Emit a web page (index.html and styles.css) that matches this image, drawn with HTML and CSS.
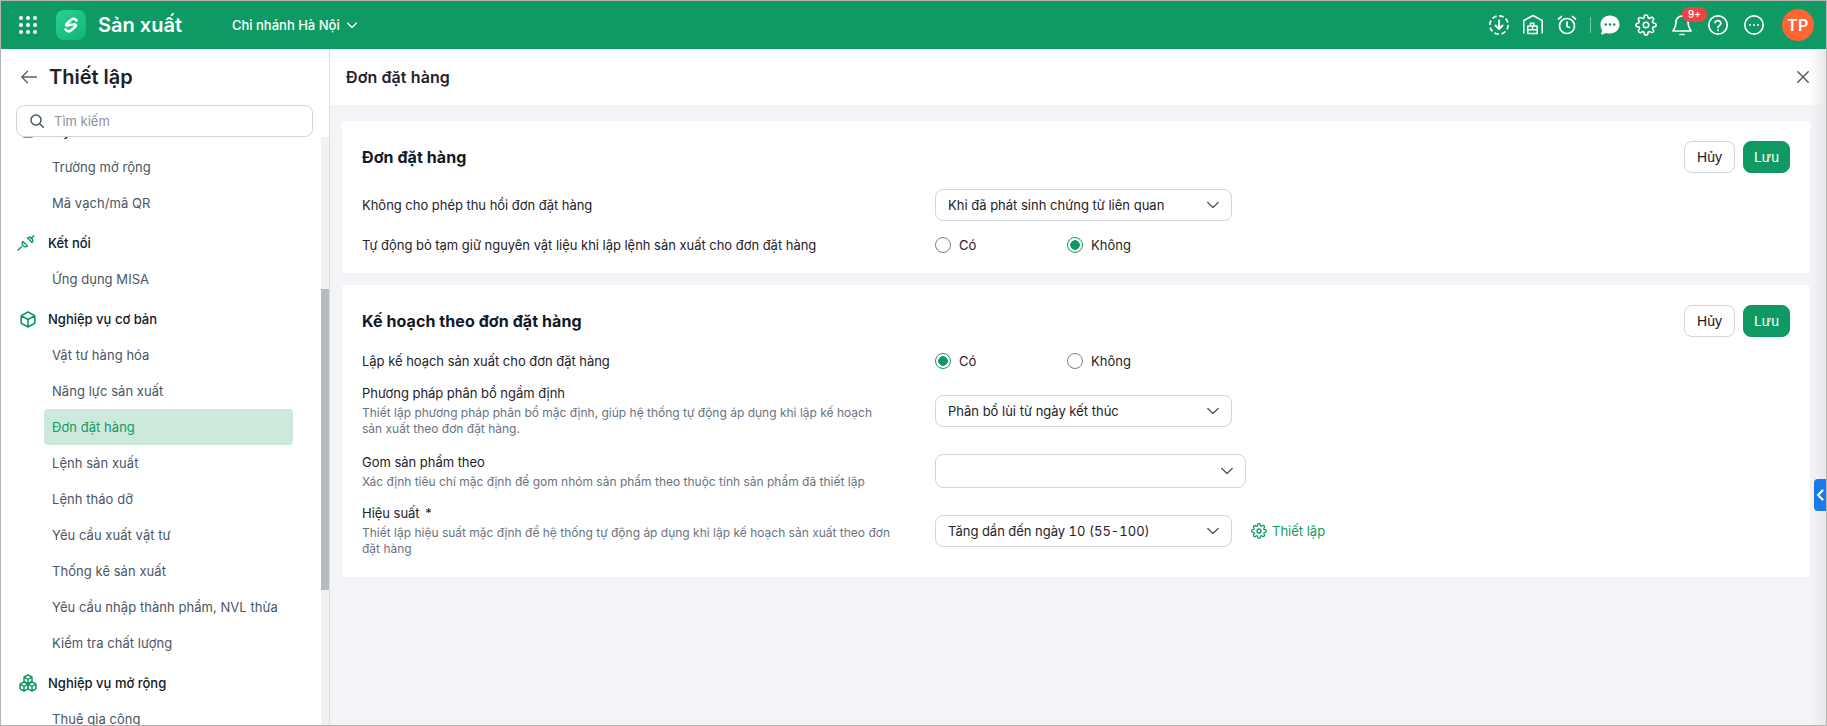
FILE: index.html
```html
<!DOCTYPE html>
<html lang="vi">

<head>
    <meta charset="UTF-8">
    <meta name="viewport" content="width=device-width, initial-scale=1.0">
    <title>Đơn đặt hàng</title>
    <link rel="stylesheet" href="styles.css">
</head>

<body>
    <div class="window">
        <header class="topbar">
            <svg class="apps-icon" width="18" height="18" viewBox="0 0 18 18" fill="#fff">
                <circle cx="2" cy="2" r="2"/><circle cx="9" cy="2" r="2"/><circle cx="16" cy="2" r="2"/>
                <circle cx="2" cy="9" r="2"/><circle cx="9" cy="9" r="2"/><circle cx="16" cy="9" r="2"/>
                <circle cx="2" cy="16" r="2"/><circle cx="9" cy="16" r="2"/><circle cx="16" cy="16" r="2"/>
            </svg>
            <div class="logo">
                <svg width="20" height="20" viewBox="0 0 20 20" fill="none" stroke="#fff" stroke-width="2.600" stroke-linecap="round" stroke-linejoin="round">
                    <path d="M15.500 5.500C13 2.500 11 3.800 9 5.800L5.500 9C4.500 10.500 6 11 8 10L12 9.500C14.500 9 15.500 10 14.500 11.500L11 14.500C9 16.500 7 17.500 4.500 14.500"/>
                </svg>
            </div>
            <div class="app-name">Sản xuất</div>
            <div class="branch">
                Chi nhánh Hà Nội
                <svg width="12" height="12" viewBox="0 0 12 12" fill="none" stroke="#fff" stroke-width="1.300" stroke-linecap="round" stroke-linejoin="round"><path d="M1.500 4 6 8.500 10.500 4"/></svg>
            </div>
            <div class="topbar-right">
                <svg class="top-icon tight" width="22" height="22" viewBox="0 0 22 22" fill="none" stroke="#fff" stroke-width="1.700" stroke-linejoin="round">
                    <circle cx="11" cy="11" r="9.200" stroke-dasharray="4.600 2.600"/>
                    <path d="M11 6.500v8M7.500 11.500 11 15l3.500-3.500" stroke-width="2" stroke-linecap="round"/>
                </svg>
                <svg class="top-icon tight" width="22" height="22" viewBox="0 0 22 22" fill="none" stroke="#fff" stroke-width="1.500" stroke-linejoin="round">
                    <path d="M1.800 19.500V6.500L11 1.500l9.200 5v13"/>
                    <path d="M5.800 19.500v-7.500h9.400v7.500zM5.800 15.800h9.400M8.500 12V9.300h3.400V12M10.500 12v3.800"/>
                </svg>
                <svg class="top-icon tight" width="22" height="22" viewBox="0 0 22 22" fill="none" stroke="#fff" stroke-width="1.700" stroke-linecap="round" stroke-linejoin="round">
                    <circle cx="11" cy="12" r="7.500"/>
                    <path d="M11 8v4.500l2.500 1M2.500 5 5.500 2.500M19.500 5l-3-2.500"/>
                </svg>
                <span class="top-divider"></span>
                <svg class="top-icon" width="22" height="22" viewBox="0 0 22 22">
                    <path fill="#fff" d="M11 1.500c5.400 0 9.500 3.900 9.500 9s-4.100 9-9.500 9c-1.200 0-2.400-.2-3.500-.6L3 20.500c-.6.2-1.100-.3-.9-.9l1-3.400C2 14.800 1.500 12.700 1.500 10.500c0-5.100 4.100-9 9.500-9z"/>
                    <circle cx="6.800" cy="10.500" r="1.300" fill="#0f9a63"/><circle cx="11" cy="10.500" r="1.300" fill="#0f9a63"/><circle cx="15.200" cy="10.500" r="1.300" fill="#0f9a63"/>
                </svg>
                <svg class="top-icon" width="22" height="22" viewBox="0 0 24 24" fill="none" stroke="#fff" stroke-width="1.700" stroke-linecap="round" stroke-linejoin="round">
                    <circle cx="12" cy="12" r="3"/>
                    <path d="M19.400 15a1.650 1.650 0 0 0 .33 1.820l.06.06a2 2 0 1 1-2.830 2.830l-.06-.06a1.650 1.650 0 0 0-2.820 1.170V21a2 2 0 1 1-4 0v-.09A1.650 1.650 0 0 0 7.260 19.700l-.06.06a2 2 0 1 1-2.830-2.830l.06-.06A1.650 1.650 0 0 0 3.260 14H3a2 2 0 1 1 0-4h.09A1.650 1.650 0 0 0 4.300 7.260l-.06-.06a2 2 0 1 1 2.830-2.830l.06.06A1.650 1.650 0 0 0 10 3.260V3a2 2 0 1 1 4 0v.09a1.650 1.650 0 0 0 2.820 1.170l.06-.06a2 2 0 1 1 2.830 2.830l-.06.06A1.650 1.650 0 0 0 20.740 10H21a2 2 0 1 1 0 4h-.09a1.650 1.650 0 0 0-1.510 1z"/>
                </svg>
                <div class="bell">
                    <svg class="top-icon" width="22" height="24" viewBox="0 0 22 24" fill="none" stroke="#fff" stroke-width="1.700" stroke-linecap="round" stroke-linejoin="round">
                        <path d="M11 3c-3.500 0-6 2.800-6 6.300 0 5-2.500 7.200-3 8.700h18c-.5-1.500-3-3.700-3-8.700C17 5.800 14.500 3 11 3z"/>
                        <path d="M9 21.500h4"/>
                    </svg>
                    <span class="bell-badge">9+</span>
                </div>
                <svg class="top-icon" width="22" height="22" viewBox="0 0 22 22" fill="none" stroke="#fff" stroke-width="1.700" stroke-linecap="round" stroke-linejoin="round">
                    <circle cx="11" cy="11" r="9.200"/>
                    <path d="M8 8.500a3 3 0 0 1 5.800.8c0 2-2.800 2.500-2.800 4.200M11 16.200v.2"/>
                </svg>
                <svg class="top-icon" width="22" height="22" viewBox="0 0 22 22" fill="none" stroke="#fff" stroke-width="1.700">
                    <circle cx="11" cy="11" r="9.200"/>
                    <circle cx="7" cy="11" r="1" fill="#fff" stroke="none"/><circle cx="11" cy="11" r="1" fill="#fff" stroke="none"/><circle cx="15" cy="11" r="1" fill="#fff" stroke="none"/>
                </svg>
                <div class="avatar">TP</div>
            </div>
        </header>

        <div class="main">
            <aside class="sidebar">
                <div class="sidebar-head">
                    <svg width="16" height="14" viewBox="0 0 16 14" fill="none" stroke="#5a6270" stroke-width="1.400" stroke-linecap="round" stroke-linejoin="round"><path d="M15.500 7H.8M6.500 1.300.8 7l5.700 5.700"/></svg>
                    <h1>Thiết lập</h1>
                </div>
                <div class="search">
                    <svg width="14" height="14" viewBox="0 0 14 14" fill="none" stroke="#4b5563" stroke-width="1.500" stroke-linecap="round"><circle cx="6" cy="6" r="5"/><path d="M10 10l3.500 3.500"/></svg>
                    <span>Tìm kiếm</span>
                </div>
                <div class="nav-wrap">
                    <nav class="nav">
                        <div class="nav-group">
                            <svg width="16" height="16" viewBox="0 0 16 16" fill="none" stroke="#0f9a63" stroke-width="1.500"><rect x="2" y="2" width="12" height="12" rx="3" fill="#bfe6d4"/></svg>
                            Tùy chỉnh
                        </div>
                        <a class="nav-item">Trường mở rộng</a>
                        <a class="nav-item">Mã vạch/mã QR</a>
                        <div class="nav-group">
                            <svg class="plug-icon" width="18" height="16" viewBox="0 0 18 16" fill="none" stroke="#0f9a63" stroke-width="1.400" stroke-linecap="round" stroke-linejoin="round">
                                <path d="M1 15 4.500 11.800M14 3.500 16.800.8"/>
                                <path d="M6 6.500 10.500 11A3.200 3.200 0 0 1 6 6.500z"/>
                                <path d="M10.500 3 15 7.500A3.200 3.200 0 0 0 10.500 3z"/>
                            </svg>
                            Kết nối
                        </div>
                        <a class="nav-item">Ứng dụng MISA</a>
                        <div class="nav-group">
                            <svg width="16" height="17" viewBox="0 0 16 17" fill="none" stroke="#0f9a63" stroke-width="1.600" stroke-linejoin="round">
                                <path d="M8 1 14.800 4.800v7.400L8 16l-6.800-3.800V4.800zM1.200 4.800 8 8.500l6.800-3.700M8 8.500V16"/>
                            </svg>
                            Nghiệp vụ cơ bản
                        </div>
                        <a class="nav-item">Vật tư hàng hóa</a>
                        <a class="nav-item">Năng lực sản xuất</a>
                        <a class="nav-item active">Đơn đặt hàng</a>
                        <a class="nav-item">Lệnh sản xuất</a>
                        <a class="nav-item">Lệnh tháo dỡ</a>
                        <a class="nav-item">Yêu cầu xuất vật tư</a>
                        <a class="nav-item">Thống kê sản xuất</a>
                        <a class="nav-item">Yêu cầu nhập thành phẩm, NVL thừa</a>
                        <a class="nav-item">Kiểm tra chất lượng</a>
                        <div class="nav-group">
                            <svg class="cubes-icon" width="18" height="18" viewBox="0 0 18 18" fill="none" stroke="#0f9a63" stroke-width="1.500" stroke-linejoin="round">
                                <path d="M9 1l4 2.200v4.300L9 9.700 5 7.500V3.200zM5 3.200l4 2.200 4-2.200M9 5.400v4.300"/>
                                <path d="M5 8l4 2.200v4.600L5 17l-4-2.200v-4.600zM1 10.200l4 2.200 4-2.200M5 12.400V17"/>
                                <path d="M13 8l4 2.200v4.600L13 17l-4-2.200v-4.600zM9 10.200l4 2.200 4-2.200M13 12.400V17"/>
                            </svg>
                            Nghiệp vụ mở rộng
                        </div>
                        <a class="nav-item">Thuê gia công</a>
                    </nav>
                    <div class="scroll-track">
                        <div class="scroll-thumb"></div>
                    </div>
                </div>
            </aside>

            <section class="content">
                <div class="content-head">
                    <h2>Đơn đặt hàng</h2>
                    <svg width="12" height="12" viewBox="0 0 12 12" fill="none" stroke="#4b5563" stroke-width="1.400" stroke-linecap="round"><path d="M.8.800l10.400 10.400M11.200.800.800 11.200"/></svg>
                </div>
                <div class="content-body">
                    <div class="card card-order">
                        <div class="card-title">
                            <h3>Đơn đặt hàng</h3>
                            <div class="card-actions">
                                <button class="btn">Hủy</button>
                                <button class="btn btn-primary">Lưu</button>
                            </div>
                        </div>
                        <div class="form-row">
                            <div class="field-text"><label>Không cho phép thu hồi đơn đặt hàng</label></div>
                            <div class="select">
                                <span>Khi đã phát sinh chứng từ liên quan</span>
                                <svg width="12" height="12" viewBox="0 0 12 12" fill="none" stroke="#4b5563" stroke-width="1.300" stroke-linecap="round" stroke-linejoin="round"><path d="M.8 3.500 6 8.500l5.200-5"/></svg>
                            </div>
                        </div>
                        <div class="form-row radio-row">
                            <div class="field-text"><label>Tự động bỏ tạm giữ nguyên vật liệu khi lập lệnh sản xuất cho đơn đặt hàng</label></div>
                            <div class="radios">
                                <div class="radio"><span class="dot"></span>Có</div>
                                <div class="radio"><span class="dot on"></span>Không</div>
                            </div>
                        </div>
                    </div>

                    <div class="card card-plan">
                        <div class="card-title">
                            <h3>Kế hoạch theo đơn đặt hàng</h3>
                            <div class="card-actions">
                                <button class="btn">Hủy</button>
                                <button class="btn btn-primary">Lưu</button>
                            </div>
                        </div>
                        <div class="form-row radio-row">
                            <div class="field-text"><label>Lập kế hoạch sản xuất cho đơn đặt hàng</label></div>
                            <div class="radios">
                                <div class="radio"><span class="dot on"></span>Có</div>
                                <div class="radio"><span class="dot"></span>Không</div>
                            </div>
                        </div>
                        <div class="form-row">
                            <div class="field-text two-lines">
                                <label>Phương pháp phân bổ ngầm định</label>
                                <p>Thiết lập phương pháp phân bổ mặc định, giúp hệ thống tự động áp dụng khi lập kế hoạch sản xuất theo đơn đặt hàng.</p>
                            </div>
                            <div class="select">
                                <span>Phân bổ lùi từ ngày kết thúc</span>
                                <svg width="12" height="12" viewBox="0 0 12 12" fill="none" stroke="#4b5563" stroke-width="1.300" stroke-linecap="round" stroke-linejoin="round"><path d="M.8 3.500 6 8.500l5.200-5"/></svg>
                            </div>
                        </div>
                        <div class="form-row">
                            <div class="field-text">
                                <label>Gom sản phẩm theo</label>
                                <p>Xác định tiêu chí mặc định để gom nhóm sản phẩm theo thuộc tính sản phẩm đã thiết lập</p>
                            </div>
                            <div class="select select-wide">
                                <span></span>
                                <svg width="12" height="12" viewBox="0 0 12 12" fill="none" stroke="#4b5563" stroke-width="1.300" stroke-linecap="round" stroke-linejoin="round"><path d="M.8 3.500 6 8.500l5.200-5"/></svg>
                            </div>
                        </div>
                        <div class="form-row">
                            <div class="field-text two-lines">
                                <label>Hiệu suất <span class="required">*</span></label>
                                <p>Thiết lập hiệu suất mặc định để hệ thống tự động áp dụng khi lập kế hoạch sản xuất theo đơn đặt hàng</p>
                            </div>
                            <div class="select">
                                <span class="tabular">Tăng dần đến ngày 10 (55-100)</span>
                                <svg width="12" height="12" viewBox="0 0 12 12" fill="none" stroke="#4b5563" stroke-width="1.300" stroke-linecap="round" stroke-linejoin="round"><path d="M.8 3.500 6 8.500l5.200-5"/></svg>
                            </div>
                            <a class="setup-link">
                                <svg width="16" height="16" viewBox="0 0 24 24" fill="none" stroke="#0f9a63" stroke-width="2" stroke-linecap="round" stroke-linejoin="round">
                                    <circle cx="12" cy="12" r="3"/>
                                    <path d="M19.400 15a1.650 1.650 0 0 0 .33 1.820l.06.06a2 2 0 1 1-2.830 2.830l-.06-.06a1.650 1.650 0 0 0-2.820 1.170V21a2 2 0 1 1-4 0v-.09A1.650 1.650 0 0 0 7.260 19.700l-.06.06a2 2 0 1 1-2.830-2.830l.06-.06A1.650 1.650 0 0 0 3.260 14H3a2 2 0 1 1 0-4h.09A1.650 1.650 0 0 0 4.300 7.260l-.06-.06a2 2 0 1 1 2.830-2.830l.06.06A1.650 1.650 0 0 0 10 3.260V3a2 2 0 1 1 4 0v.09a1.650 1.650 0 0 0 2.820 1.170l.06-.06a2 2 0 1 1 2.830 2.830l-.06.06A1.650 1.650 0 0 0 20.740 10H21a2 2 0 1 1 0 4h-.09a1.650 1.650 0 0 0-1.510 1z"/>
                                </svg>
                                Thiết lập
                            </a>
                        </div>
                    </div>
                </div>
                <div class="edge-shade"></div>
                <div class="edge-tab">
                    <svg width="8" height="12" viewBox="0 0 8 12" fill="none" stroke="#fff" stroke-width="2.200" stroke-linecap="round" stroke-linejoin="round"><path d="M6.500 1.500 2 6l4.500 4.500"/></svg>
                </div>
            </section>
        </div>
    </div>
</body>

</html>
```

FILE: styles.css
```css
/* Page shell */
* {
    box-sizing: border-box;
}

body {
    margin: 0;
    font-family: Inter, "Noto Sans", sans-serif;
    font-size: 13px;
    color: #1f2229;
    background-color: #fff;
    overflow: hidden;
}

.window {
    display: flex;
    flex-direction: column;
    height: 726px;
    border: 1px solid #b4b4b4;
    overflow: hidden;
}

/* Top bar */
.topbar {
    display: flex;
    align-items: center;
    flex: 0 0 48px;
    background-color: #0f9a63;
    color: #fff;
    padding-left: 18px;
}

.logo {
    display: flex;
    align-items: center;
    justify-content: center;
    width: 30px;
    height: 30px;
    margin-left: 19px;
    border-radius: 8px;
    background: linear-gradient(145deg, #2cd08f, #0fb573);
}

.app-name {
    margin-left: 12px;
    font-size: 20px;
    font-weight: 600;
}

.branch {
    display: flex;
    align-items: center;
    gap: 6px;
    margin-left: 50px;
    font-size: 13px;
    font-weight: 500;
}

.topbar-right {
    display: flex;
    align-items: center;
    margin-left: auto;
    padding-right: 12px;
}

.top-icon {
    display: block;
    margin-right: 14px;
}

.top-icon.tight {
    margin-right: 12px;
}

.top-divider {
    width: 1px;
    height: 16px;
    margin-right: 8px;
    background-color: rgba(255, 255, 255, 0.45);
}

.bell {
    position: relative;
}

.bell-badge {
    position: absolute;
    top: -6px;
    left: 11px;
    width: 25px;
    height: 15px;
    border-radius: 8px;
    background-color: #ef4444;
    font-size: 10px;
    font-weight: 500;
    line-height: 15px;
    text-align: center;
}

.avatar {
    display: flex;
    align-items: center;
    justify-content: center;
    width: 32px;
    height: 32px;
    margin-left: 3px;
    border-radius: 50%;
    background-color: #ff6432;
    font-size: 16px;
    font-weight: 600;
    letter-spacing: 0.5px;
}

.main {
    display: flex;
    flex: 1;
    min-height: 0;
}

/* Sidebar */
.sidebar {
    display: flex;
    flex-direction: column;
    flex: 0 0 329px;
    border-right: 1px solid #dcdee2;
}

.sidebar-head {
    display: flex;
    align-items: center;
    gap: 12px;
    flex: 0 0 56px;
    padding-left: 20px;
}

.sidebar-head h1 {
    margin: 0;
    font-size: 20px;
    font-weight: 600;
}

.search {
    display: flex;
    align-items: center;
    gap: 10px;
    flex: 0 0 32px;
    width: 297px;
    margin-left: 15px;
    padding-left: 13px;
    border: 1px solid #d4d5dc;
    border-radius: 8px;
    color: #8d929b;
}

.nav-wrap {
    display: flex;
    flex: 1;
    min-height: 0;
    overflow: hidden;
}

.nav {
    flex: 1;
    margin-top: -28px;
}

.nav-group {
    display: flex;
    align-items: center;
    gap: 12px;
    height: 40px;
    padding-top: 4px;
    padding-left: 19px;
    font-weight: 500;
    color: #111827;
}

.nav-group svg {
    flex: 0 0 auto;
}

.nav-group .plug-icon {
    margin-left: -3px;
    margin-right: 1px;
}

.nav-group .cubes-icon {
    margin-left: -1px;
    margin-right: -1px;
}

.nav-item {
    display: flex;
    align-items: center;
    width: 249px;
    height: 36px;
    margin-left: 43px;
    padding-left: 8px;
    border-radius: 4px;
    color: #4b5563;
    letter-spacing: 0.05px;
}

.nav-item.active {
    background-color: #cde9dc;
    color: #0f9a63;
}

.scroll-track {
    flex: 0 0 8px;
    background-color: #f1f1f1;
}

.scroll-thumb {
    height: 301px;
    margin-top: 152px;
    background-color: #b6bbc2;
}

/* Content */
.content {
    position: relative;
    display: flex;
    flex-direction: column;
    flex: 1;
    min-width: 0;
    background-color: #f2f4f7;
}

.content-head {
    display: flex;
    align-items: center;
    justify-content: space-between;
    flex: 0 0 56px;
    padding: 0 17px 0 16px;
    background-color: #fff;
}

.content-head h2 {
    margin: 0;
    font-size: 16px;
    font-weight: 600;
    letter-spacing: 0.1px;
}

.content-body {
    display: flex;
    flex-direction: column;
    gap: 12px;
    padding: 16px 16px 0 12px;
}

.card {
    display: flex;
    flex-direction: column;
    gap: 13px;
    padding: 20px 20px 19px 20px;
    border-radius: 4px;
    background-color: #fff;
}

.card-plan {
    padding-bottom: 18px;
}

.card-title {
    display: flex;
    align-items: center;
    justify-content: space-between;
    height: 32px;
}

.card-title h3 {
    margin: 0;
    font-size: 16px;
    font-weight: 700;
    letter-spacing: 0.08px;
    color: #111827;
}

.card-actions {
    display: flex;
    gap: 8px;
}

.btn {
    width: 51px;
    height: 32px;
    border: 1px solid #d4d5dc;
    border-radius: 8px;
    background-color: #fff;
    color: #111827;
    font-family: "Liberation Sans", Arial, sans-serif;
    font-size: 14px;
    font-weight: 400;
}

.btn-primary {
    width: 47px;
    border-color: #0f9a63;
    background-color: #0f9a63;
    color: #fff;
}

.form-row {
    display: flex;
    align-items: center;
}

.card-order .form-row:nth-child(2) {
    margin-top: 3px;
}

.field-text {
    flex: 0 0 573px;
    padding-right: 42px;
}

.field-text label {
    display: block;
    line-height: 20px;
    letter-spacing: -0.03px;
}

.field-text p {
    margin: 2px 0 0;
    font-size: 12px;
    line-height: 16px;
    color: #6b7280;
}

.two-lines {
    padding-bottom: 2px;
}

.required {
    margin-left: 2px;
}

.select {
    display: flex;
    align-items: center;
    justify-content: space-between;
    width: 297px;
    height: 32px;
    padding: 0 12px;
    border: 1px solid #d4d5dc;
    border-radius: 8px;
    background-color: #fff;
}

.select-wide {
    width: 311px;
    height: 34px;
}

.tabular {
    font-variant-numeric: tabular-nums;
}

.radio-row {
    height: 20px;
    padding-top: 2px;
}

.radios {
    display: flex;
}

.radio {
    display: flex;
    align-items: center;
    gap: 8px;
    width: 132px;
}

.dot {
    width: 16px;
    height: 16px;
    border: 1px solid #7b818c;
    border-radius: 50%;
}

.dot.on {
    border-color: #0f9a63;
    background: radial-gradient(circle, #0f9a63 0 4.5px, #fff 5px);
}

.setup-link {
    display: flex;
    align-items: center;
    gap: 5px;
    margin-left: 19px;
    color: #0f9a63;
}

/* Right edge */
.edge-shade {
    position: absolute;
    top: 0;
    right: 0;
    bottom: 0;
    width: 16px;
    background: linear-gradient(to right, rgba(225, 228, 232, 0), #e6e8eb);
    pointer-events: none;
}

.edge-tab {
    position: absolute;
    top: 430px;
    right: 0;
    display: flex;
    align-items: center;
    justify-content: center;
    width: 12px;
    height: 32px;
    border-radius: 4px 0 0 4px;
    background-color: #1a7ae8;
}
```
